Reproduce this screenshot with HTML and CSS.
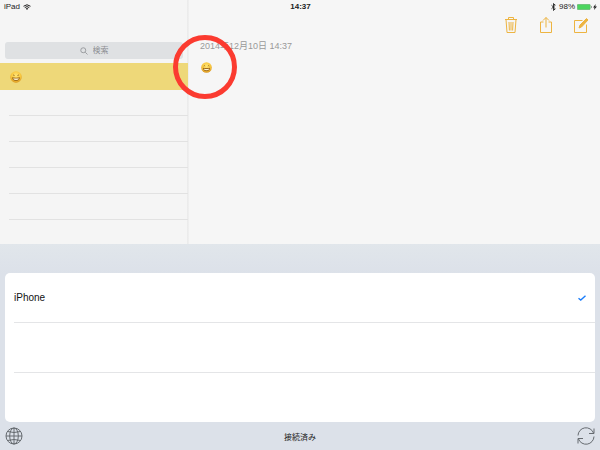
FILE: index.html
```html
<!DOCTYPE html>
<html lang="ja">
<head>
<meta charset="utf-8">
<meta name="viewport" content="width=device-width, initial-scale=1">
<title>メモ</title>
<link rel="stylesheet" href="styles.css">
</head>
<body>
<svg class="defs" aria-hidden="true">
  <defs>
    <radialGradient id="face" cx="50%" cy="38%" r="62%">
      <stop offset="0" stop-color="#ffe67a"/>
      <stop offset=".65" stop-color="#f8c63c"/>
      <stop offset="1" stop-color="#d8921c"/>
    </radialGradient>
    <symbol id="smile" viewBox="0 0 24 24">
      <circle cx="12" cy="12" r="11.5" fill="url(#face)"/>
      <path d="M6 9q1.500-2 3 0M15 9q1.500-2 3 0" fill="none" stroke="#8a5a14" stroke-width="1.600"/>
      <path d="M4 12.500q8 1.500 16 0-.5 7.500-8 7.500t-8-7.500z" fill="#a06c1c"/>
      <path d="M6.500 14.500q5.500 1 11 0-.5 2.500-2 3-3.500.6-7 0-1.500-.5-2-3z" fill="#fbf2d2"/>
    </symbol>
  </defs>
</svg>
<main class="screen">
  <section class="notes">
    <header class="status">
      <div class="status-side">
        <span>iPad</span>
        <svg class="wifi" viewBox="0 0 16 12" fill="none" stroke="#222" stroke-width="2"><path d="M1 4.500q7-6 14 0M3.500 7.200q4.500-4 9 0"/><path d="M5.500 9q2.500-2 5 0L8 12z" fill="#222" stroke="none"/></svg>
      </div>
      <time class="clock">14:37</time>
      <div class="status-side status-right">
        <svg class="bluetooth" viewBox="0 0 10 16" fill="none" stroke="#222" stroke-width="1.800"><path d="M1 4.500l7.500 7L5 15V1l3.500 3.500-7.500 7"/></svg>
        <span>98%</span>
        <svg class="battery" viewBox="0 0 32 12"><rect x=".5" y=".5" width="26" height="11" rx="2" fill="#4cd55f" stroke="#6d9b72"/><path d="M28.500 3.500q3 2.500 0 5z" fill="#333"/></svg>
        <svg class="bolt" viewBox="0 0 8 12"><path d="M5.500 0L0 7h3l-1 5 6-7H4.500z" fill="#222"/></svg>
      </div>
    </header>
    <div class="columns">
      <aside class="sidebar">
        <label class="search">
          <svg viewBox="0 0 16 16" fill="none" stroke="#8c8e92" stroke-width="1.600" aria-hidden="true"><circle cx="6.500" cy="6.500" r="5"/><path d="M10.500 10.500l4.500 4.500"/></svg>
          <input type="search" placeholder="検索" aria-label="検索">
        </label>
        <button class="note-row" type="button" aria-label="笑顔のメモ"><svg class="emoji"><use href="#smile"/></svg></button>
        <ul class="empty-rows"><li></li><li></li><li></li><li></li><li></li></ul>
      </aside>
      <article class="editor">
        <nav class="tools">
          <button type="button" aria-label="削除"><svg viewBox="0 0 14 18"><path d="M1 3.500h12M4.500 3.500V1.500h5v2M2 3.500l1 13h8l1-13M5 6l.4 8.500M7 6v8.500M9 6l-.4 8.500"/></svg></button>
          <button type="button" aria-label="共有"><svg viewBox="0 0 14 18"><path d="M4.500 6H1.500v10.500h11V6h-3M7 11.500V1.500M4 4.500l3-3 3 3"/></svg></button>
          <button type="button" aria-label="新規メモ"><svg viewBox="0 0 14 18"><path d="M8.500 4.500h-8v12h12V8.500"/><path d="M5 12l1-3 6.500-6.500 1.500 1.500L7.500 11z" fill="#edb441"/></svg></button>
        </nav>
        <time class="date">2014年12月10日 14:37</time>
        <div class="note-body"><svg class="emoji" role="img" aria-label="笑顔"><use href="#smile"/></svg><span class="marker"></span></div>
      </article>
    </div>
  </section>
  <section class="keyboard">
    <div class="devices">
      <button class="device" type="button"><span>iPhone</span><svg viewBox="0 0 16 12" fill="none" stroke="#1b7dfa" stroke-width="2.800"><path d="M1 6.500l4.500 3.500 9.500-8.500"/></svg></button>
      <div class="device"></div>
      <div class="device"></div>
    </div>
    <footer class="keybar">
      <button type="button" aria-label="次のキーボード"><svg viewBox="0 0 18 18"><circle cx="9" cy="9" r="8"/><ellipse cx="9" cy="9" rx="4.300" ry="8"/><path d="M9 1v16M1 9h16M2.500 4.500q6.500 2 13 0M2.500 13.500q6.500-2 13 0"/></svg></button>
      <span class="connected">接続済み</span>
      <button type="button" aria-label="更新"><svg viewBox="0 0 18 18"><path d="M1 8.500A8 8 0 0 1 16.500 6M17 9.500A8 8 0 0 1 1.500 12M17 1.500V6.500H12M1 16.500v-5h5"/></svg></button>
    </footer>
  </section>
</main>
</body>
</html>
```
FILE: styles.css
```css
* {
  box-sizing: border-box;
}

body {
  margin: 0;
  font-family: "Liberation Sans", "Noto Sans CJK JP", sans-serif;
  font-size: 8px;
  color: #222;
}

button {
  margin: 0;
  padding: 0;
  border: 0;
  background: none;
  font: inherit;
  color: inherit;
}

svg {
  display: block;
  flex: none;
}

.defs {
  position: absolute;
  width: 0;
  height: 0;
}

.screen {
  display: flex;
  flex-direction: column;
  min-height: 100vh;
  background: #dde2ea;
}

.notes {
  display: flex;
  flex-direction: column;
  flex: 1;
  background: linear-gradient(90deg, #f5f5f5 187px, #eaeaea 187px, #f0f0f0 189px, #f6f6f6 189px);
}

.status {
  display: grid;
  grid-template-columns: 1fr auto 1fr;
  align-items: center;
  height: 13px;
  padding: 0 3px 0 4px;
}

.status-side {
  display: flex;
  align-items: center;
  gap: 3px;
}

.status-right {
  justify-content: flex-end;
  gap: 2px;
}

.status-right .bluetooth {
  margin-right: 1px;
}

.clock {
  font-weight: bold;
}

.wifi {
  width: 8px;
  height: 6px;
}

.bluetooth {
  width: 5px;
  height: 8px;
}

.battery {
  width: 16px;
  height: 6px;
}

.bolt {
  width: 4px;
  height: 6px;
}

.status-right .bolt {
  margin-left: -2px;
}

.columns {
  display: grid;
  grid-template-columns: 188px 1fr;
  flex: 1;
}

.sidebar {
  padding: 29px 0 24px;
}

.search {
  display: flex;
  align-items: center;
  justify-content: center;
  gap: 5px;
  height: 17px;
  margin: 0 5px 4px;
  border-radius: 3px;
  background: #dfe1e3;
}

.search svg {
  width: 8px;
  height: 8px;
}

.search input {
  field-sizing: content;
  min-width: 16px;
  padding: 0;
  border: 0;
  outline: 0;
  appearance: none;
  background: none;
  font: inherit;
  line-height: 16px;
}

.search input::placeholder {
  color: #8c8e92;
}

.note-row {
  display: flex;
  align-items: center;
  width: 100%;
  height: 27px;
  padding-left: 10px;
  background: #eed879;
}

.emoji {
  width: 12px;
  height: 12px;
}

.empty-rows {
  margin: 0 0 0 9px;
  padding: 0;
  list-style: none;
}

.empty-rows li {
  height: 26px;
  border-bottom: 1px solid #e2e2e2;
}

.editor {
  display: flex;
  flex-direction: column;
  padding: 3px 12px 0;
}

.tools {
  display: flex;
  justify-content: flex-end;
  gap: 21px;
  height: 18px;
  margin-bottom: 6px;
}

.tools svg {
  width: 14px;
  height: 18px;
  fill: none;
  stroke: #edb441;
  stroke-width: 1;
}

.date {
  font-size: 9px;
  line-height: 12px;
  color: #999;
}

.note-body {
  position: relative;
  align-self: flex-start;
  margin: 10px 0 0 1px;
}

.note-body .emoji {
  width: 11px;
  height: 11px;
}

.marker {
  position: absolute;
  top: -27px;
  left: -28px;
  width: 64px;
  height: 64px;
  border: 5px solid #fb3b30;
  border-radius: 50%;
}

.keyboard {
  padding: 29px 5px 0;
  background: linear-gradient(#e1e6eb, #dce1e9 30px);
}

.devices {
  padding-left: 9px;
  border-radius: 5px;
  background: #fff;
}

.device {
  display: flex;
  align-items: center;
  justify-content: space-between;
  width: 100%;
  height: 50px;
  padding-right: 9px;
  border-bottom: 1px solid #e4e5e7;
  font-size: 10px;
  color: #111;
}

.device:last-child {
  height: 49px;
  border-bottom: 0;
}

.device svg {
  width: 8px;
  height: 6px;
}

.keybar {
  display: flex;
  align-items: center;
  justify-content: space-between;
  height: 28px;
}

.keybar svg {
  width: 18px;
  height: 18px;
  fill: none;
  stroke: #666b70;
  stroke-width: 1;
}

.connected {
  font-size: 8px;
}
```
